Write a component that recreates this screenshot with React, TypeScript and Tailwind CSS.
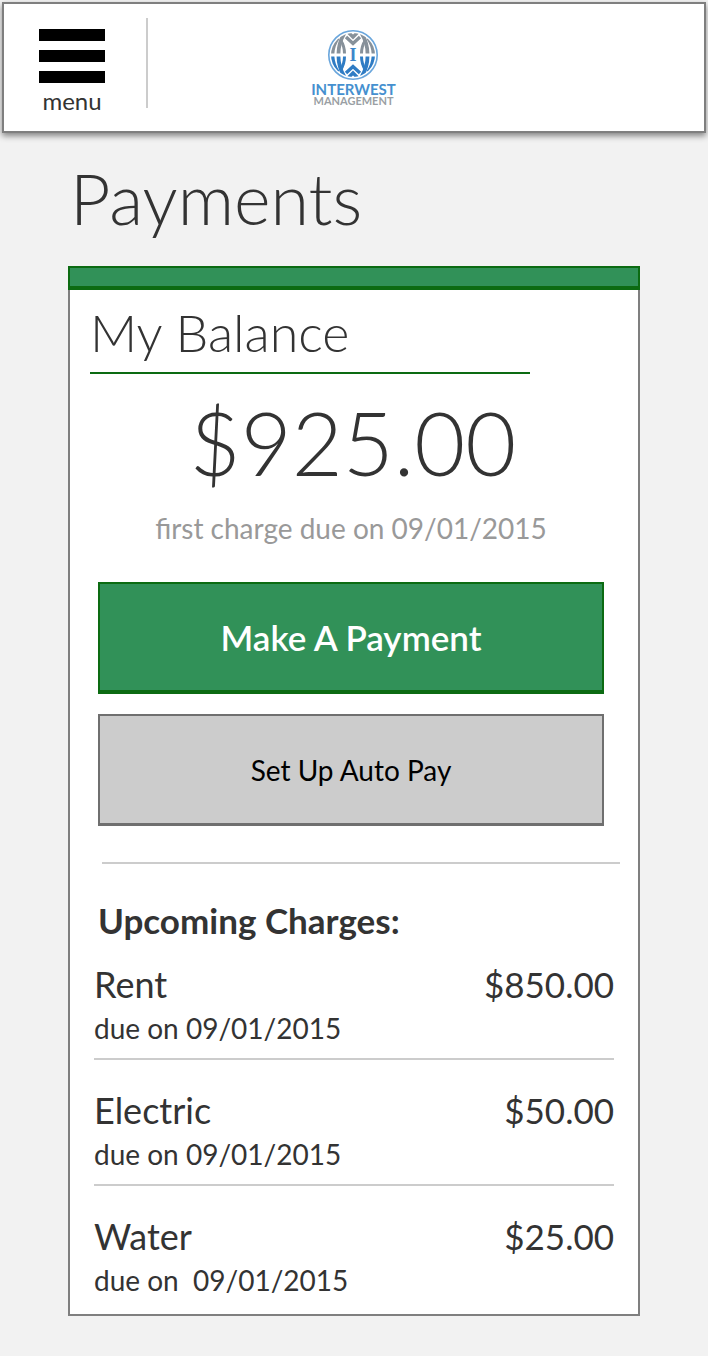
const charges = [
  { name: "Rent", due: "due on 09/01/2015", amount: "$850.00" },
  { name: "Electric", due: "due on 09/01/2015", amount: "$50.00" },
  { name: "Water", due: "due on \u00a009/01/2015", amount: "$25.00" },
];

function Logo() {
  return (
    <a href="#home" aria-label="Interwest Management" className="flex">
      <svg width="88" height="79" viewBox="0 0 88 79">
        <defs>
          <clipPath id="disc">
            <circle cx="43" cy="26" r="22" />
          </clipPath>
          <g id="fins" fill="none" strokeWidth="3.8">
            <path d="M22.5 24.5Q23 16 28 9" />
            <path d="M28.5 24.5Q28.5 14 34.5 4" />
            <path d="M34.5 24.5Q34.5 17 30.5 11" strokeWidth="3" />
            <path d="M63.5 24.5Q63 16 58 9" />
            <path d="M57.5 24.5Q57.5 14 51.5 4" />
            <path d="M51.5 24.5Q51.5 17 55.5 11" strokeWidth="3" />
            <path d="M36 8L43 14.5L50 8" strokeWidth="3.4" />
            <path d="M37 2L43 8L49 2" strokeWidth="3.4" />
          </g>
        </defs>
        <circle cx="43" cy="26" r="24.2" fill="#fff" stroke="#6aa6dc" strokeWidth="1.6" />
        <g clipPath="url(#disc)">
          <use href="#fins" stroke="#87919a" />
          <use href="#fins" stroke="#2f7cc4" transform="matrix(1 0 0 -1 0 52)" />
        </g>
        <text x="43" y="32" textAnchor="middle" fontFamily="Liberation Serif, serif" fontSize="18" fontWeight="700" fill="#3d86ca">I</text>
        <text x="43.5" y="66" textAnchor="middle" fontFamily="Lato, sans-serif" fontSize="15" fontWeight="700" fill="#4590cf">INTERWEST</text>
        <text x="43.5" y="76" textAnchor="middle" fontFamily="Lato, sans-serif" fontSize="11" fontWeight="700" fill="#9a9fa4">MANAGEMENT</text>
      </svg>
    </a>
  );
}

export default function App() {
  return (
    <div className="min-h-screen bg-[#f2f2f2] px-0.5 pt-0.5 pb-10 font-['Lato',sans-serif] text-[#333333]">
      <header className="grid grid-cols-[1fr_auto_1fr] border-2 border-[#7f7f7f] bg-white pt-3.5 pb-[23px] shadow-[0_3px_6px_rgba(0,0,0,0.45)]">
        <div className="flex">
          <button type="button" className="flex h-[90px] w-36 flex-col items-center border-r-2 border-[#cccccc] pt-[11px] pr-1.5">
            <span aria-hidden="true" className="flex flex-col gap-[9px]">
              <span className="h-3 w-[66px] bg-black" />
              <span className="h-3 w-[66px] bg-black" />
              <span className="h-3 w-[66px] bg-black" />
            </span>
            <span className="pt-2.5 text-2xl leading-4">menu</span>
          </button>
        </div>
        <div className="pt-[11px]">
          <Logo />
        </div>
      </header>

      <main className="px-[66px]">
        <h1 className="pt-[29px] pb-8 pl-0.5 text-[70px] leading-[72px] font-light">Payments</h1>

        <section className="border-2 border-t-0 border-[#7f7f7f] bg-white">
          <div className="-mx-0.5 h-6 border-2 border-b-4 border-[#0c6b12] bg-[#319158]" />
          <div className="pt-2.5 pr-[34px] pb-9 pl-7">
            <h2 className="-ml-2 max-w-[440px] border-b-2 border-[#0c6b12] pb-2 text-[52px] leading-[64px] font-light">My Balance</h2>
            <p className="pt-6 pl-1 text-center text-[88px] leading-none font-light">$925.00</p>
            <p className="pt-6 text-center text-[28px] leading-9 text-[#999999]">first charge due on 09/01/2015</p>
            <div className="flex flex-col gap-5 pt-9">
              <button type="button" className="h-28 border-2 border-b-4 border-[#0c6b12] bg-[#319158] text-[35px] font-semibold text-white">Make A Payment</button>
              <button type="button" className="h-28 border-2 border-b-3 border-[#6f6f6f] bg-[#cccccc] text-[28px] text-black">Set Up Auto Pay</button>
            </div>
          </div>

          <div className="pr-6 pb-4 pl-6">
            <div className="-mr-1.5 ml-2 border-t-2 border-[#cccccc]" />
            <h3 className="pt-9 pl-1 text-[35px] leading-10 font-bold">Upcoming Charges:</h3>
            <ul>
              {charges.map((charge) => (
                <li key={charge.name} className="border-b-2 border-[#cccccc] pt-[30px] pb-3 first:pt-6 last:border-b-0 last:pb-0">
                  <div className="flex justify-between text-[35px] leading-10">
                    <span className="text-4xl leading-10">{charge.name}</span>
                    <span>{charge.amount}</span>
                  </div>
                  <p className="pt-1.5 text-[28px] leading-9">{charge.due}</p>
                </li>
              ))}
            </ul>
          </div>
        </section>
      </main>
    </div>
  );
}
